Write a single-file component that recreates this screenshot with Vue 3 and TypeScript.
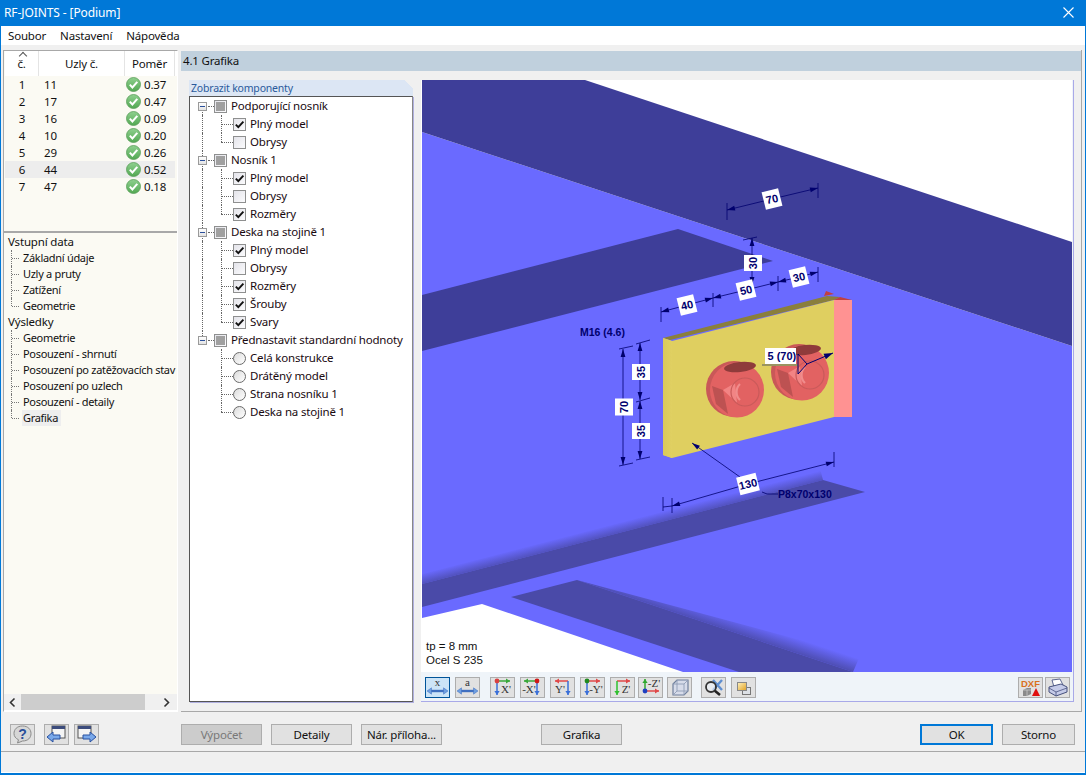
<template>
  <div class="window">
    <div class="titlebar">
      <span>RF-JOINTS - [Podium]</span>
      <svg class="close" width="11" height="11" viewBox="0 0 11 11">
        <path d="M0.5 0.5 L10.5 10.5 M10.5 0.5 L0.5 10.5" stroke="#fff" stroke-width="1.1" />
      </svg>
    </div>
    <div class="menu">
      <span v-for="m in menuItems" :key="m">{{ m }}</span>
    </div>

    <div class="main">
      <aside class="sidebar">
        <div class="table">
          <div class="thead">
            <div class="th c1"><i class="caret"></i>č.</div>
            <div class="th c2">Uzly č.</div>
            <div class="th c3">Poměr</div>
          </div>
          <div
            v-for="r in nodes"
            :key="r.id"
            class="tr"
            :class="{ selected: r.id === 6 }"
          >
            <span class="c1">{{ r.id }}</span>
            <span class="c2">{{ r.node }}</span>
            <span class="c3">
              <svg width="15" height="15" viewBox="0 0 15 15">
                <circle cx="7.5" cy="7.5" r="7" fill="url(#okFill)" stroke="#5a9e5a" stroke-width="0.8" />
                <path d="M3.8 7.6 L6.4 10.4 L11.3 4.8" fill="none" stroke="#fff" stroke-width="2" />
              </svg>
              {{ r.ratio }}
            </span>
          </div>
        </div>

        <div class="nav">
          <div class="nav-list">
            <template v-for="g in navGroups" :key="g.title">
              <div class="nav-root">{{ g.title }}</div>
              <div
                v-for="(c, i) in g.items"
                :key="c"
                class="nav-item"
                :class="{ last: i === g.items.length - 1 }"
              >
                <span class="nav-guide"></span>
                <span class="nav-text" :class="{ current: c === 'Grafika' }">{{ c }}</span>
              </div>
            </template>
          </div>
          <div class="hscroll">
            <svg width="17" height="15" viewBox="0 0 17 15">
              <path d="M10.5 3.5 L6.5 7.5 L10.5 11.5" fill="none" stroke="#333" stroke-width="1.6" />
            </svg>
            <div class="thumb"></div>
            <svg width="17" height="15" viewBox="0 0 17 15">
              <path d="M6.5 3.5 L10.5 7.5 L6.5 11.5" fill="none" stroke="#333" stroke-width="1.6" />
            </svg>
          </div>
        </div>
      </aside>

      <section class="content">
        <div class="content-title">4.1 Grafika</div>
        <div class="content-body">
          <div class="group">
            <div class="group-tab">Zobrazit komponenty</div>
            <div class="group-box">
              <template v-for="(g, gi) in treeGroups" :key="g.title">
                <div class="row">
                  <span class="cell-a parent" :class="{ cont: gi < treeGroups.length - 1, notfirst: gi > 0 }">
                    <span class="expander"></span>
                  </span>
                  <span class="box mixed"><i></i></span>
                  <span class="label">{{ g.title }}</span>
                </div>
                <div v-for="(c, ci) in g.items" :key="c.text" class="row">
                  <span class="cell-a" :class="{ through: gi < treeGroups.length - 1 }"></span>
                  <span class="cell-b" :class="{ lastchild: ci === g.items.length - 1 }"></span>
                  <span v-if="g.radio" class="radio"></span>
                  <span v-else class="box">
                    <svg v-if="c.on" width="11" height="11" viewBox="0 0 11 11">
                      <path d="M1.8 5.6 L4.3 8.2 L9.4 2.6" fill="none" stroke="#111" stroke-width="1.9" />
                    </svg>
                  </span>
                  <span class="label child">{{ c.text }}</span>
                </div>
              </template>
            </div>
          </div>

          <div class="view">
            <svg class="scene" width="651" height="592" viewBox="421 80 651 592">
              <defs>
                <linearGradient id="okFill" x1="0" y1="0" x2="0" y2="1">
                  <stop offset="0" stop-color="#8fd08f" />
                  <stop offset="1" stop-color="#52a852" />
                </linearGradient>
                <linearGradient id="shadeA" gradientUnits="userSpaceOnUse" x1="617.5" y1="523" x2="620" y2="532.7">
                  <stop offset="0" stop-color="#4a4aa8" stop-opacity="0" />
                  <stop offset="1" stop-color="#4a4aa8" stop-opacity="0.75" />
                </linearGradient>
                <linearGradient id="shadeB" gradientUnits="userSpaceOnUse" x1="700" y1="621" x2="704.4" y2="607.7">
                  <stop offset="0" stop-color="#4a4aa8" stop-opacity="0.85" />
                  <stop offset="1" stop-color="#4a4aa8" stop-opacity="0" />
                </linearGradient>
                <linearGradient id="bevel" x1="0" y1="0" x2="1" y2="0">
                  <stop offset="0" stop-color="#d9c95b" />
                  <stop offset="1" stop-color="#e0d062" />
                </linearGradient>
              </defs>
              <rect x="421" y="80" width="651" height="592" fill="#fff" />
              <polygon points="422,132 422,618 482,604 683,672 1072,672 1072,346" fill="#6a6aff" />
              <polygon points="422,80 585,80 1072,242 1072,346 422,132" fill="#3e3e99" />
              <polygon points="422,295 678,229 773,261 422,351" fill="#3e3e99" />
              <polygon points="422,574 820.5,470.5 823,480 422,584" fill="url(#shadeA)" />
              <polygon points="422,584 823,480 865,492 422,607" fill="#4a4aa8" />
              <polygon points="577,580 860,656 853,672" fill="url(#shadeB)" />
              <polygon points="511,597 577,580 853,672 739,672" fill="#4a4aa8" />

              <!-- plate -->
              <polygon points="663,338 827,296 840,297 834,300 670,340" fill="#8a7f3c" />
              <polygon points="824,296 826,291 834,294" fill="#c04040" />
              <polygon points="840,297 852,300 834,300" fill="#c04040" />
              <polygon points="663,338 672,341 834,300 834,417 672,458 663,455" fill="#dfcf60" />
              <polygon points="663,338 672,341 672,458 663,455" fill="url(#bevel)" />
              <rect x="834" y="300" width="18" height="117" fill="#ff9292" />

              <!-- bolts -->
              <g v-for="b in bolts" :key="b.x" :transform="`translate(${b.x} ${b.y})`">
                <ellipse cx="-1" cy="0" rx="28" ry="28" fill="#c95858" />
                <ellipse cx="2" cy="1" rx="27" ry="27.5" fill="#e26262" />
                <ellipse cx="5" cy="-22" rx="16" ry="5" transform="rotate(-6 5 -22)" fill="#8f3b3b" />
                <polygon points="-23,-3 -12,1 -7,25 -19,15" fill="#bd5252" />
                <polygon points="-12,1 0,-6 2,14" fill="#f28484" />
                <circle cx="10" cy="3" r="14" fill="none" stroke="#c95a5a" stroke-width="1.2" />
                <path d="M5 -5 A11 11 0 0 0 5 11" fill="none" stroke="#f08c8c" stroke-width="2.2" />
              </g>

              <!-- dimensions -->
              <g stroke="#00006e" stroke-width="0.8" fill="none">
                <line v-for="(t, i) in ticks" :key="'t' + i" :x1="t[0]" :y1="t[1]" :x2="t[2]" :y2="t[3]" />
                <line v-for="(d, i) in dimLines" :key="'d' + i" :x1="d[0]" :y1="d[1]" :x2="d[2]" :y2="d[3]" />
                <polyline points="762,492 767,494 778,494" />
              </g>
              <g fill="#00006e">
                <polygon v-for="(p, i) in dimHeads" :key="'h' + i" :points="p" />
              </g>
              <g v-for="l in dimLabels" :key="l.text + l.x" :transform="`translate(${l.x} ${l.y}) rotate(${l.rot})`">
                <rect :x="-l.w / 2" y="-9" :width="l.w" height="18" fill="#fff" />
                <text class="dim" text-anchor="middle" y="4">{{ l.text }}</text>
              </g>
              <text class="dim plain" x="580" y="336">M16 (4.6)</text>
              <text class="dim plain" x="778" y="498">P8x70x130</text>

              <!-- weld symbol -->
              <rect x="762" y="364" width="36" height="2" fill="#9a9460" />
              <rect x="765" y="348" width="31" height="16" fill="#fff" />
              <text class="weld" x="767.5" y="360">5 (70)</text>
              <g stroke="#00006e" stroke-width="1" fill="none">
                <polyline points="798,354 807,364 798,374 798,354" />
                <line x1="807" y1="364" x2="833" y2="353" />
              </g>
              <polygon :points="head(807, 364, 833, 353, 9, 3)" fill="#00006e" />

              <text class="note" x="426" y="650">tp = 8 mm</text>
              <text class="note" x="426" y="664">Ocel S 235</text>
            </svg>

            <div class="toolbar">
              <button
                v-for="b in viewButtons"
                :key="b.id"
                class="tool"
                :class="{ active: b.id === 'x' }"
                :style="{ marginLeft: b.gap + 'px' }"
              >
                <svg width="23" height="19" viewBox="1 1 23 19">
                  <template v-if="b.axes">
                    <g v-for="(a, i) in b.axes" :key="i">
                      <line :x1="a[0]" :y1="a[1]" :x2="a[2]" :y2="a[3]" :stroke="a[4]" stroke-width="1.5" />
                      <polygon :points="head(a[0], a[1], a[2], a[3], 4, 2.6)" :fill="a[4]" />
                    </g>
                    <circle v-if="b.dot" :cx="b.dot[0]" :cy="b.dot[1]" r="2.4" :fill="b.dot[2]" />
                    <text class="axis" :x="b.tx" :y="b.ty" text-anchor="middle">{{ b.label }}</text>
                  </template>
                  <template v-else-if="b.id === 'x' || b.id === 'a'">
                    <text class="axis" x="12.5" y="9" text-anchor="middle">{{ b.id }}</text>
                    <path d="M5 14 H20" stroke="#3f6fc0" stroke-width="2.4" />
                    <polygon points="2,14 6.5,10.8 6.5,17.2" fill="#6f9fe0" stroke="#3f6fc0" stroke-width="0.5" />
                    <polygon points="23,14 18.5,10.8 18.5,17.2" fill="#6f9fe0" stroke="#3f6fc0" stroke-width="0.5" />
                  </template>
                  <template v-else-if="b.id === 'iso'">
                    <path d="M6 7 L10 3 H21 V14 L17 18 H6 Z" fill="#d7dcea" stroke="#6f7f9c" stroke-width="1.2" />
                    <path d="M6 7 H17 V18 M17 7 L21 3 M10 3 V14 H21 M10 14 L6 18" fill="none" stroke="#8f9cb5" stroke-width="0.9" />
                  </template>
                  <template v-else-if="b.id === 'zoom'">
                    <path d="M12 3 L21 13 M21 3 L12 13" stroke="#5f8fd0" stroke-width="2.4" />
                    <circle cx="10" cy="10" r="5" fill="#eef3fa" fill-opacity="0.6" stroke="#333" stroke-width="1.8" />
                    <line x1="13.8" y1="13.8" x2="19" y2="18" stroke="#222" stroke-width="2.6" />
                  </template>
                  <template v-else>
                    <defs>
                      <linearGradient id="layerFill" x1="0" y1="0" x2="1" y2="1">
                        <stop offset="0" stop-color="#fff2c0" />
                        <stop offset="1" stop-color="#e0a020" />
                      </linearGradient>
                    </defs>
                    <rect x="11.5" y="10.5" width="8" height="7" fill="#dde1e6" stroke="#777" />
                    <rect x="6.5" y="5.5" width="9" height="8" fill="url(#layerFill)" stroke="#888" />
                  </template>
                </svg>
              </button>
              <div class="spacer"></div>
              <button class="tool">
                <svg width="23" height="19" viewBox="0 0 23 19">
                  <text class="dxf" x="11.5" y="9" text-anchor="middle">DXF</text>
                  <path d="M4 12 L8 10 H12 V16 L8 18 H4 Z" fill="#8a8a8a" />
                  <path d="M8 12 H12 M8 12 V18 M4 12 H8" fill="none" stroke="#d0d0d0" stroke-width="0.7" />
                  <polygon points="17,10 21,18 13,18" fill="#e01010" />
                </svg>
              </button>
              <button class="tool print">
                <svg width="23" height="19" viewBox="0 0 23 19">
                  <path d="M6 2 L14 1 L17 7 L8 9 Z" fill="#fff" stroke="#5c6790" />
                  <path d="M3 9 L15 6 L21 9 V14 L10 18 L3 14 Z" fill="#c5cbe8" stroke="#46517e" />
                  <path d="M3 10 L10 14 L21 10 M10 14 V18" fill="none" stroke="#46517e" stroke-width="0.8" />
                </svg>
              </button>
            </div>
          </div>
        </div>
      </section>
    </div>

    <footer class="footer">
      <button class="btn small">
        <svg width="21" height="19" viewBox="0 0 21 19">
          <path d="M10.5 1 C16 1 19 4.4 19 8.6 C19 12.8 16 16 10.5 16 L5.5 18 L6.5 14.8 C3.6 13.4 2 11.2 2 8.6 C2 4.4 5 1 10.5 1 Z" fill="#d6d6d6" stroke="#8a8a8a" />
          <text class="qm" x="10.5" y="13.5" text-anchor="middle">?</text>
        </svg>
      </button>
      <button class="btn small first-nav">
        <svg width="21" height="19" viewBox="0 0 21 19">
          <rect x="6" y="1" width="13" height="12" fill="#f4f4f4" stroke="#555" />
          <rect x="6" y="1" width="13" height="3" fill="#3c4c7c" />
          <path d="M1 12 L7 7 V10 H14 V14 H7 V17 Z" fill="#79a8ea" stroke="#2850a0" />
        </svg>
      </button>
      <button class="btn small">
        <svg width="21" height="19" viewBox="0 0 21 19">
          <rect x="2" y="1" width="13" height="12" fill="#f4f4f4" stroke="#555" />
          <rect x="2" y="1" width="13" height="3" fill="#3c4c7c" />
          <path d="M20 12 L14 7 V10 H7 V14 H14 V17 Z" fill="#79a8ea" stroke="#2850a0" />
        </svg>
      </button>
      <button class="btn wide disabled calc">Výpočet</button>
      <button class="btn wide">Detaily</button>
      <button class="btn wide">Nár. příloha...</button>
      <button class="btn wide graphic">Grafika</button>
      <div class="spacer"></div>
      <button class="btn action ok">OK</button>
      <button class="btn action">Storno</button>
    </footer>
    <div class="statusbar"></div>
  </div>
</template>

<script setup lang="ts">
type Line = [number, number, number, number];
type Axis = [number, number, number, number, string];

interface ViewButton {
  id: string;
  gap: number;
  axes?: Axis[];
  dot?: [number, number, string];
  label?: string;
  tx?: number;
  ty?: number;
}

const menuItems = ["Soubor", "Nastavení", "Nápověda"];

const nodes = [
  { id: 1, node: 11, ratio: "0.37" },
  { id: 2, node: 17, ratio: "0.47" },
  { id: 3, node: 16, ratio: "0.09" },
  { id: 4, node: 10, ratio: "0.20" },
  { id: 5, node: 29, ratio: "0.26" },
  { id: 6, node: 44, ratio: "0.52" },
  { id: 7, node: 47, ratio: "0.18" },
];

const navGroups = [
  { title: "Vstupní data", items: ["Základní údaje", "Uzly a pruty", "Zatížení", "Geometrie"] },
  {
    title: "Výsledky",
    items: [
      "Geometrie",
      "Posouzení - shrnutí",
      "Posouzení po zatěžovacích stav",
      "Posouzení po uzlech",
      "Posouzení - detaily",
      "Grafika",
    ],
  },
];

const treeGroups = [
  {
    title: "Podporující nosník",
    items: [
      { text: "Plný model", on: true },
      { text: "Obrysy", on: false },
    ],
  },
  {
    title: "Nosník 1",
    items: [
      { text: "Plný model", on: true },
      { text: "Obrysy", on: false },
      { text: "Rozměry", on: true },
    ],
  },
  {
    title: "Deska na stojině 1",
    items: [
      { text: "Plný model", on: true },
      { text: "Obrysy", on: false },
      { text: "Rozměry", on: true },
      { text: "Šrouby", on: true },
      { text: "Svary", on: true },
    ],
  },
  {
    title: "Přednastavit standardní hodnoty",
    radio: true,
    items: [
      { text: "Celá konstrukce", on: false },
      { text: "Drátěný model", on: false },
      { text: "Strana nosníku 1", on: false },
      { text: "Deska na stojině 1", on: false },
    ],
  },
];

const bolts = [
  { x: 735, y: 389 },
  { x: 800, y: 372 },
];

const ticks: Line[] = [
  [727, 203, 727, 220],
  [818, 183, 818, 198],
  [743, 240, 757, 237],
  [661, 307, 661, 322],
  [713, 293, 713, 307],
  [778, 276, 778, 291],
  [818, 267, 818, 282],
  [619, 349, 633, 346],
  [619, 466, 633, 463],
  [636, 344, 650, 340],
  [636, 402, 650, 398],
  [636, 460, 650, 457],
  [663, 497, 663, 511],
  [672, 498, 672, 513],
  [834, 452, 834, 467],
  [663, 507, 672, 506],
];

const arrows: Line[] = [
  [772, 199, 727, 210],
  [772, 199, 818, 188],
  [752, 260, 752, 238],
  [752, 262, 752, 285],
  [687, 305, 661, 312],
  [687, 305, 713, 298],
  [746, 290, 713, 298],
  [746, 290, 778, 282],
  [799, 277, 778, 282],
  [799, 277, 818, 272],
  [623, 407, 623, 349],
  [623, 407, 623, 465],
  [640, 372, 640, 343],
  [640, 372, 640, 400],
  [640, 431, 640, 401],
  [640, 431, 640, 459],
  [748, 484, 672, 506],
  [748, 484, 834, 462],
  [740, 477, 692, 443],
];

const dimLines = arrows;
const dimHeads = arrows.map((a) => head(a[0], a[1], a[2], a[3], 8, 2.4));

const dimLabels = [
  { text: "70", x: 772, y: 199, rot: -14, w: 17 },
  { text: "30", x: 753, y: 263, rot: -90, w: 16 },
  { text: "40", x: 687, y: 305, rot: -14, w: 17 },
  { text: "50", x: 746, y: 290, rot: -14, w: 17 },
  { text: "30", x: 799, y: 277, rot: -14, w: 17 },
  { text: "70", x: 624, y: 407, rot: -90, w: 17 },
  { text: "35", x: 641, y: 372, rot: -90, w: 16 },
  { text: "35", x: 641, y: 431, rot: -90, w: 16 },
  { text: "130", x: 748, y: 484, rot: -14, w: 20 },
];

const viewButtons: ViewButton[] = [
  { id: "x", gap: 0 },
  { id: "a", gap: 5 },
  {
    id: "xp",
    gap: 10,
    axes: [
      [7, 4, 20, 4, "#3aa83a"],
      [7, 4, 7, 18, "#3a6fd8"],
    ],
    dot: [7, 4, "#d84040"],
    label: "X'",
    tx: 16,
    ty: 16,
  },
  {
    id: "xm",
    gap: 5,
    axes: [
      [17, 4, 4, 4, "#3aa83a"],
      [17, 4, 17, 18, "#3a6fd8"],
    ],
    dot: [17, 4, "#d01818"],
    label: "-X'",
    tx: 9,
    ty: 16,
  },
  {
    id: "yp",
    gap: 5,
    axes: [
      [18, 4, 5, 4, "#e04848"],
      [18, 4, 18, 18, "#3a6fd8"],
    ],
    label: "Y'",
    tx: 10,
    ty: 16,
  },
  {
    id: "ym",
    gap: 5,
    axes: [
      [7, 4, 20, 4, "#e04848"],
      [7, 4, 7, 18, "#3a6fd8"],
    ],
    dot: [7, 4, "#1f8a1f"],
    label: "-Y'",
    tx: 16,
    ty: 16,
  },
  {
    id: "zp",
    gap: 5,
    axes: [
      [7, 4, 20, 4, "#e04848"],
      [7, 4, 7, 18, "#2fc02f"],
    ],
    label: "Z'",
    tx: 16,
    ty: 16,
  },
  {
    id: "zm",
    gap: 3,
    axes: [
      [7, 14, 7, 2, "#2fa82f"],
      [7, 14, 21, 14, "#e04848"],
    ],
    dot: [7, 14, "#1f3fc0"],
    label: "-Z'",
    tx: 16,
    ty: 10,
  },
  { id: "iso", gap: 4 },
  { id: "zoom", gap: 9 },
  { id: "layers", gap: 5 },
];

function head(x1: number, y1: number, x2: number, y2: number, len: number, half: number): string {
  const d = Math.hypot(x2 - x1, y2 - y1) || 1;
  const ux = (x2 - x1) / d;
  const uy = (y2 - y1) / d;
  const bx = x2 - ux * len;
  const by = y2 - uy * len;
  return `${x2},${y2} ${bx - uy * half},${by + ux * half} ${bx + uy * half},${by - ux * half}`;
}
</script>

<style>
html,
body {
  margin: 0;
  background: #f0f0f0;
}
</style>

<style scoped>
.window {
  width: 1086px;
  height: 775px;
  box-sizing: border-box;
  display: flex;
  flex-direction: column;
  background: #f0f0f0;
  border: 1px solid #0078d7;
  border-top: 0;
  border-bottom-width: 2px;
  font-family: "Noto Sans", "Liberation Sans", sans-serif;
  font-size: 11.5px;
  letter-spacing: -0.18px;
  color: #111;
  overflow: hidden;
}
.titlebar {
  height: 26px;
  flex: none;
  box-sizing: border-box;
  background: #0078d7;
  color: #fff;
  display: flex;
  align-items: center;
  justify-content: space-between;
  padding: 0 11px 2px 3px;
  font-size: 12px;
  letter-spacing: -0.1px;
}
.menu {
  height: 19px;
  flex: none;
  background: #fff;
  display: flex;
  gap: 14px;
  align-items: center;
  padding-left: 7px;
}
.main {
  height: 667px;
  flex: none;
  display: flex;
  padding: 5px 3px 0 2px;
  box-sizing: border-box;
  gap: 3px;
}
.sidebar {
  width: 175px;
  flex: none;
  display: flex;
  flex-direction: column;
  border: 1px solid #a8a8a8;
  border-right-color: #fff;
  border-bottom-color: #fff;
  box-sizing: border-box;
}
.table {
  height: 182px;
  flex: none;
  background: #fbfaf3;
  box-sizing: border-box;
  border-bottom: 2px solid #a8a8a8;
  padding-left: 1px;
}
.thead {
  height: 25px;
  display: grid;
  grid-template-columns: 34px 86px 50px;
  background: #fff;
}
.th {
  position: relative;
  display: flex;
  align-items: center;
  justify-content: center;
  border-right: 1px solid #e4e4e4;
  padding-bottom: 1px;
}
.caret {
  position: absolute;
  top: 2px;
  left: 15px;
  width: 5px;
  height: 5px;
  border-left: 1px solid #555;
  border-top: 1px solid #555;
  transform: rotate(45deg);
}
.tr {
  height: 17px;
  width: 170px;
  display: grid;
  grid-template-columns: 34px 86px 50px;
  align-items: center;
}
.tr.selected {
  background: #ededed;
}
.tr .c1 {
  text-align: center;
}
.tr .c2 {
  padding-left: 5px;
}
.tr .c3 {
  display: flex;
  align-items: center;
  gap: 3px;
  padding-left: 1px;
}
.nav {
  flex: 1;
  min-height: 0;
  background: #fbfaf3;
  display: flex;
  flex-direction: column;
}
.nav-list {
  flex: 1;
  min-height: 0;
  padding: 1px 0 0 4px;
  white-space: nowrap;
}
.nav-root {
  height: 16px;
  line-height: 16px;
}
.nav-item {
  height: 16px;
  display: flex;
  align-items: center;
}
.nav-guide {
  width: 12px;
  height: 16px;
  margin-left: 3px;
  flex: none;
  box-sizing: border-box;
  border-left: 1px dotted #777;
  position: relative;
}
.nav-guide::after {
  content: "";
  position: absolute;
  left: 0;
  top: 8px;
  width: 7px;
  border-top: 1px dotted #777;
}
.nav-item.last .nav-guide {
  height: 8px;
  align-self: flex-start;
}
.nav-text {
  padding-left: 1px;
  line-height: 16px;
  margin-left: -1px;
  font-size: 11px;
  letter-spacing: -0.3px;
}
.nav-text.current {
  background: #eeeeee;
  padding-right: 3px;
}
.hscroll {
  height: 16px;
  flex: none;
  background: #f0f0f0;
  display: flex;
  align-items: center;
  border-bottom: 1px solid #fff;
}
.thumb {
  width: 124px;
  height: 16px;
  background: #cdcdcd;
  margin-right: 13px;
}
.content {
  flex: 1;
  min-width: 0;
  display: flex;
  flex-direction: column;
  border-bottom: 1px solid #a8a8a8;
  border-right: 1px solid #a8a8a8;
  margin-bottom: 0;
}
.content-title {
  height: 20px;
  flex: none;
  margin-top: 1px;
  background: #c0d0dd;
  line-height: 20px;
  padding-left: 2px;
}
.content-body {
  flex: 1;
  min-height: 0;
  display: flex;
  gap: 8px;
  padding: 9px 7px 9px 8px;
}
.group {
  width: 224px;
  flex: none;
  display: flex;
  flex-direction: column;
}
.group-tab {
  height: 16px;
  flex: none;
  background: linear-gradient(225deg, transparent 6px, #dce6f4 6px);
  color: #2a5a9c;
  padding-left: 2px;
  line-height: 16px;
  font-size: 10.5px;
  letter-spacing: -0.2px;
  box-sizing: border-box;
}
.group-box {
  flex: 1;
  min-height: 0;
  background: #fff;
  border: 1px solid #555;
  border-right-color: #888;
  box-shadow: 1px 1px 0 #b0b0e0;
  box-sizing: border-box;
  padding-top: 0;
}
.row {
  height: 18px;
  display: flex;
  align-items: center;
  white-space: nowrap;
}
.cell-a {
  width: 24px;
  height: 18px;
  flex: none;
  position: relative;
}
.cell-a.through::before,
.cell-a.parent.cont::before {
  content: "";
  position: absolute;
  left: 12px;
  top: 0;
  bottom: 0;
  border-left: 1px dotted #666;
}
.cell-a.parent.cont::before {
  top: 9px;
}
.cell-a.parent.notfirst::after {
  content: "";
  position: absolute;
  left: 12px;
  top: 0;
  height: 9px;
  border-left: 1px dotted #666;
}
.expander {
  position: absolute;
  left: 8px;
  top: 5px;
  width: 9px;
  height: 9px;
  box-sizing: border-box;
  border: 1px solid #9a9a9a;
  background: linear-gradient(#fff, #e2e2e2);
  z-index: 1;
}
.expander::before {
  content: "";
  position: absolute;
  left: 1px;
  right: 1px;
  top: 3px;
  border-top: 1px solid #2a4f9a;
}
.expander::after {
  content: "";
  position: absolute;
  left: 9px;
  top: 3px;
  width: 6px;
  border-top: 1px dotted #666;
}
.cell-b {
  width: 19px;
  height: 18px;
  flex: none;
  position: relative;
}
.cell-b::before {
  content: "";
  position: absolute;
  left: 7px;
  top: 0;
  bottom: 0;
  border-left: 1px dotted #666;
}
.cell-b.lastchild::before {
  bottom: 9px;
}
.cell-b::after {
  content: "";
  position: absolute;
  left: 7px;
  right: 0;
  top: 9px;
  border-top: 1px dotted #666;
}
.box {
  width: 13px;
  height: 13px;
  flex: none;
  box-sizing: border-box;
  border: 1px solid #8e8f8f;
  background: linear-gradient(135deg, #e4e4ea, #fbfbfd);
  display: flex;
  align-items: center;
  justify-content: center;
}
.box.mixed i {
  width: 9px;
  height: 9px;
  background: #a0a0a0;
}
.radio {
  width: 13px;
  height: 13px;
  flex: none;
  box-sizing: border-box;
  border: 1px solid #6a6a6a;
  border-radius: 50%;
  background: linear-gradient(135deg, #dcdcdc, #fff);
}
.label {
  margin-left: 4px;
  margin-bottom: 2px;
  color: #1a0a10;
}
.view {
  flex: 1;
  min-width: 0;
  display: flex;
  flex-direction: column;
  border-right: 1px solid #a9a9e8;
  border-bottom: 1px solid #a9a9e8;
  background: #eff4f9;
}
.scene {
  display: block;
  flex: none;
}
.scene text {
  font-family: "Liberation Sans", Arial, sans-serif;
  letter-spacing: 0;
}
.dim {
  font-size: 11px;
  font-weight: 700;
  fill: #00006e;
}
.dim.plain {
  font-size: 10.5px;
}
.weld {
  font-size: 11px;
  font-weight: 700;
  fill: #00006e;
}
.note {
  font-size: 11.5px;
  fill: #111;
}
.toolbar {
  flex: 1;
  min-height: 0;
  display: flex;
  align-items: flex-start;
  padding: 5px 3px 0 4px;
}
.tool {
  width: 25px;
  height: 21px;
  flex: none;
  padding: 0;
  border: 1px solid #adadad;
  background: #e1e1e1;
  display: flex;
  align-items: center;
  justify-content: center;
}
.tool svg {
  overflow: visible;
}
.tool.print {
  margin-left: 2px;
}
.tool.active {
  background: #cce4f7;
  border-color: #005499;
}
.axis {
  font-family: "Liberation Serif", serif;
  font-size: 11px;
  fill: #333;
  letter-spacing: 0;
}
.dxf {
  font-family: "Liberation Sans", sans-serif;
  font-size: 9.5px;
  font-weight: 700;
  fill: #d9701c;
  letter-spacing: 0;
}
.qm {
  font-family: "Liberation Sans", sans-serif;
  font-size: 14px;
  font-weight: 700;
  fill: #2a4f9a;
}
.spacer {
  flex: 1;
}
.footer {
  height: 40px;
  flex: none;
  box-sizing: border-box;
  display: flex;
  align-items: flex-start;
  padding: 12px 10px 0 9px;
  border-bottom: 1px solid #a8a8a8;
}
.btn {
  height: 21px;
  box-sizing: border-box;
  border: 1px solid #adadad;
  background: #e1e1e1;
  font-family: inherit;
  font-size: 11.5px;
  letter-spacing: -0.18px;
  color: #111;
  padding: 0;
  display: flex;
  align-items: center;
  justify-content: center;
  flex: none;
}
.btn.small {
  width: 25px;
  margin-right: 5px;
}
.btn.first-nav {
  margin-left: 4px;
}
.btn.wide {
  width: 81px;
  margin-right: 9px;
}
.btn.calc {
  margin-left: 77px;
}
.btn.graphic {
  margin-left: 90px;
  margin-right: 0;
}
.btn.disabled {
  background: #cccccc;
  color: #787878;
}
.btn.action {
  width: 73px;
  margin-left: 9px;
}
.btn.ok {
  border: 2px solid #0078d7;
}
.statusbar {
  flex: 1;
  min-height: 0;
  border-bottom: 1px solid #fff;
}
</style>
